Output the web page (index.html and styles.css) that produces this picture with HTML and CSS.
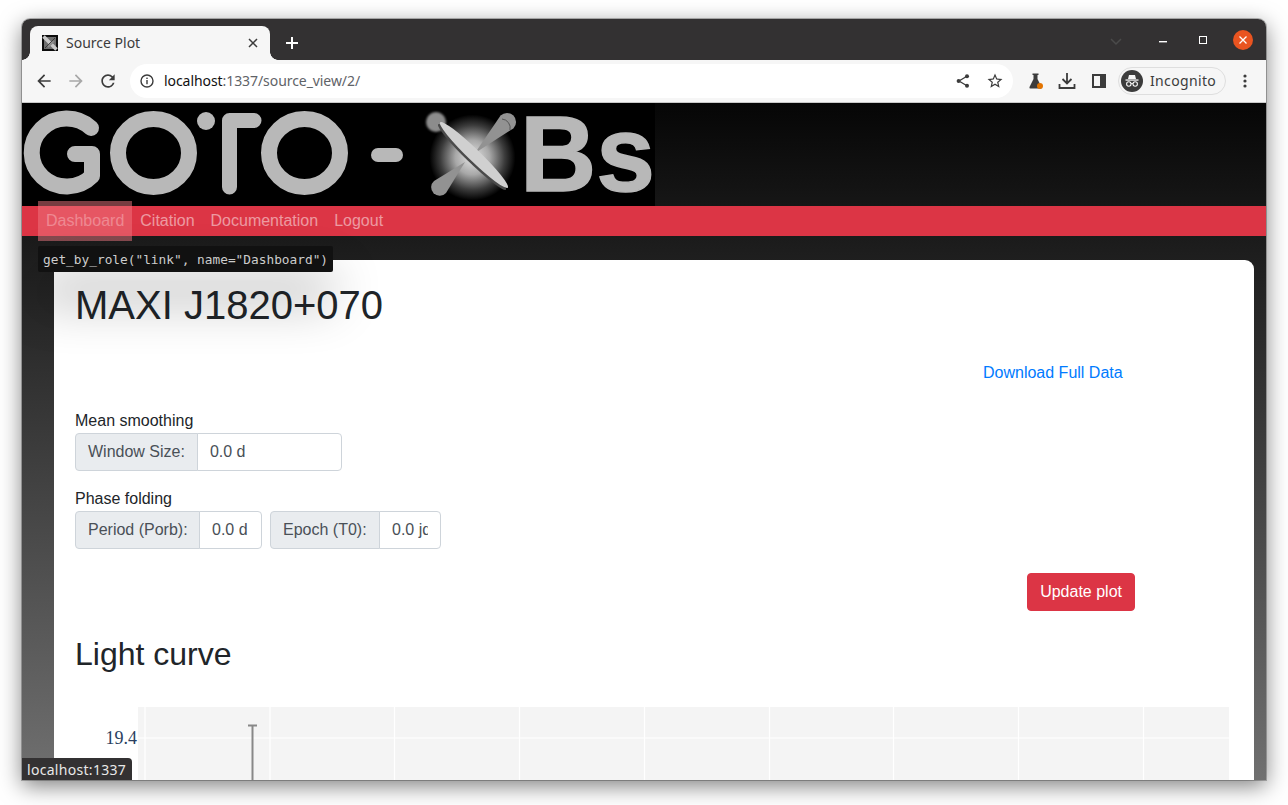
FILE: index.html
```html
<!DOCTYPE html>
<html lang="en">
<head>
<meta charset="utf-8">
<title>Source Plot</title>
<link rel="stylesheet" href="styles.css">
</head>
<body>
<div class="window">
  <div class="tabstrip">
    <div class="tab">
      <svg class="favicon" width="16" height="16" viewBox="0 0 16 16"><rect width="16" height="16" fill="#0c0c0c"/><rect x="2" y="2" width="12" height="12" fill="#6e6e6e"/><path d="M1.500 1.500 L14.500 14.500" stroke="#c8c8c8" stroke-width="3.500"/><path d="M3 13 L13 3" stroke="#3a3a3a" stroke-width="1"/><path d="M6 12 L12 6" stroke="#8c8c8c" stroke-width="2"/></svg>
      <span class="tab-title">Source Plot</span>
      <svg class="tab-close" width="10" height="10" viewBox="0 0 10 10"><path d="M1 1 L9 9 M9 1 L1 9" stroke="#3c3c3c" stroke-width="1.5"/></svg>
    </div>
    <svg class="new-tab" width="14" height="14" viewBox="0 0 14 14"><path d="M7 1 V13 M1 7 H13" stroke="#fff" stroke-width="2"/></svg>
    <div class="window-controls">
      <svg class="tab-search" width="12" height="8" viewBox="0 0 12 8"><path d="M1 1 L6 6 L11 1" fill="none" stroke="#4a4a4a" stroke-width="1.5"/></svg>
      <svg class="win-min" width="8" height="2" viewBox="0 0 8 2"><rect width="8" height="1.400" fill="#fff"/></svg>
      <svg class="win-max" width="8" height="8" viewBox="0 0 8 8"><rect x=".5" y=".5" width="7" height="7" fill="none" stroke="#fff"/></svg>
      <span class="win-close"><svg width="8" height="8" viewBox="0 0 8 8"><path d="M.5 .5 L7.500 7.500 M7.500 .5 L.5 7.500" stroke="#fff" stroke-width="1.300"/></svg></span>
    </div>
  </div>
  <div class="toolbar">
    <svg class="tool" width="20" height="20" viewBox="0 0 24 24"><path fill="#3c3c3c" d="M20 11H7.830l5.590-5.590L12 4l-8 8 8 8 1.410-1.410L7.830 13H20v-2z"/></svg>
    <svg class="tool" width="20" height="20" viewBox="0 0 24 24"><path fill="#a8a8a8" d="M4 11h12.170l-5.590-5.590L12 4l8 8-8 8-1.410-1.410L16.170 13H4v-2z"/></svg>
    <svg class="tool" width="20" height="20" viewBox="0 0 24 24"><path fill="#3c3c3c" d="M17.650 6.350A7.960 7.960 0 0 0 12 4c-4.420 0-7.990 3.580-7.990 8s3.570 8 7.990 8c3.730 0 6.840-2.550 7.730-6h-2.080A5.990 5.990 0 0 1 12 18c-3.310 0-6-2.690-6-6s2.690-6 6-6c1.660 0 3.140.69 4.220 1.780L13 11h7V4l-2.350 2.350z"/></svg>
    <div class="omnibox">
      <svg class="info" width="16" height="16" viewBox="0 0 16 16"><circle cx="8" cy="8" r="6" fill="none" stroke="#3c3c3c" stroke-width="1.400"/><rect x="7.300" y="7" width="1.400" height="4.200" fill="#3c3c3c"/><rect x="7.300" y="4.600" width="1.400" height="1.400" fill="#3c3c3c"/></svg>
      <span class="url"><span class="url-host">localhost</span>:1337/source_view/2/</span>
      <svg class="omni-share" width="16" height="16" viewBox="0 0 16 16"><path d="M11.500 3.500 L4 8 L11.500 12.500" fill="none" stroke="#3c3c3c" stroke-width="1.300"/><circle cx="12" cy="3.200" r="2" fill="#3c3c3c"/><circle cx="3.600" cy="8" r="2" fill="#3c3c3c"/><circle cx="12" cy="12.800" r="2" fill="#3c3c3c"/></svg>
      <svg class="omni-star" width="18" height="18" viewBox="0 0 24 24"><path fill="#3c3c3c" d="M22 9.240l-7.190-.62L12 2 9.190 8.630 2 9.240l5.460 4.730L5.820 21 12 17.270 18.180 21l-1.630-7.030L22 9.240zM12 15.400l-3.760 2.270 1-4.280-3.320-2.880 4.380-.38L12 6.100l1.710 4.040 4.380.38-3.320 2.880 1 4.280L12 15.400z"/></svg>
    </div>
    <svg class="ext-flask" width="16" height="18" viewBox="0 0 16 18"><path fill="#3c3c3c" d="M4.500 1.500 H10.500 V3 H9.500 V7 L13.500 15 Q14 16.500 12.500 16.500 H2.500 Q1 16.500 1.500 15 L5.500 7 V3 H4.500 Z"/><circle cx="12" cy="14" r="3" fill="#e37400"/></svg>
    <svg class="ext-dl" width="18" height="18" viewBox="0 0 18 18"><path d="M9 1 V11 M4.500 7 L9 11.500 L13.500 7" fill="none" stroke="#3c3c3c" stroke-width="1.800"/><path d="M1.500 12 V16 H16.500 V12" fill="none" stroke="#3c3c3c" stroke-width="1.800"/></svg>
    <svg class="ext-panel" width="14" height="14" viewBox="0 0 14 14"><rect x="1" y="1" width="12" height="12" fill="none" stroke="#3c3c3c" stroke-width="2"/><rect x="8" y="1" width="5" height="12" fill="#3c3c3c"/></svg>
    <div class="profile">
      <svg class="profile-icon" width="22" height="22" viewBox="0 0 22 22"><circle cx="11" cy="11" r="11" fill="#3c3c3c"/><path d="M7 9 L8 5 H14 L15 9 Z" fill="#f6f6f6"/><rect x="4.500" y="9.400" width="13" height="1.300" fill="#f6f6f6"/><circle cx="7.800" cy="14" r="2.200" fill="none" stroke="#f6f6f6" stroke-width="1.100"/><circle cx="14.200" cy="14" r="2.200" fill="none" stroke="#f6f6f6" stroke-width="1.100"/><path d="M10 13.600 H12" stroke="#f6f6f6" stroke-width="1"/></svg>
      <span>Incognito</span>
    </div>
    <svg class="kebab" width="4" height="14" viewBox="0 0 4 14"><circle cx="2" cy="2" r="1.600" fill="#3c3c3c"/><circle cx="2" cy="7" r="1.600" fill="#3c3c3c"/><circle cx="2" cy="12" r="1.600" fill="#3c3c3c"/></svg>
  </div>

  <div class="page">
    <header class="banner">
      <svg class="logo" width="633" height="103" viewBox="22 103 633 103" role="img" aria-label="GOTO - XBs">
        <defs>
          <radialGradient id="glow"><stop offset="0" stop-color="#e4e4e4"/><stop offset=".4" stop-color="#a8a8a8"/><stop offset=".75" stop-color="#3c3c3c"/><stop offset="1" stop-color="#000"/></radialGradient>
          <filter id="soft" x="-30%" y="-30%" width="160%" height="160%"><feGaussianBlur stdDeviation="1"/></filter>
        </defs>
        <rect x="22" y="103" width="633" height="103" fill="#000"/>
        <g fill="none" stroke="#b8b8b8" stroke-width="16" stroke-linecap="round" stroke-linejoin="round">
          <path d="M91 128 A35 34 0 1 0 92 176 V154 H75"/>
          <ellipse cx="153.500" cy="153" rx="35.500" ry="34"/>
          <path d="M254 120.500 H229.500 V187" stroke-width="15"/>
          <ellipse cx="304.500" cy="153" rx="35.500" ry="34"/>
          <path d="M378 155 H396" stroke-width="14"/>
        </g>
        <circle cx="206" cy="121" r="9" fill="#b8b8b8"/>
        <circle cx="472.500" cy="157.500" r="43" fill="url(#glow)"/>
        <circle cx="436" cy="122" r="10" fill="#8c8c8c" filter="url(#soft)"/>
        <path d="M475 153 L500.600 115.600 A9 9 0 1 1 513.400 128.400 Z" fill="#929292"/>
        <path d="M502 119 A9 9 0 0 1 510 130" fill="none" stroke="#555" stroke-width="1"/>
        <path d="M465 162 L434 181 A8.500 8.500 0 1 0 446 193 Z" fill="#929292"/>
        <ellipse cx="472" cy="157" rx="47" ry="5.500" transform="rotate(44 472 157)" fill="#4a4a4a"/>
        <ellipse cx="474" cy="155" rx="47" ry="6" transform="rotate(44 474 155)" fill="#d0d0d0"/>
        <text class="logo-bs" x="520" y="191" textLength="135" lengthAdjust="spacingAndGlyphs">Bs</text>
      </svg>
    </header>
    <nav class="navbar">
      <a class="nav-link" href="#">Dashboard</a>
      <a class="nav-link" href="#">Citation</a>
      <a class="nav-link" href="#">Documentation</a>
      <a class="nav-link" href="#">Logout</a>
    </nav>
    <main class="card">
      <h1>MAXI J1820+070</h1>
      <div class="download-row"><a href="#">Download Full Data</a></div>
      <div class="field-label">Mean smoothing</div>
      <div class="groups">
        <div class="input-group">
          <span class="addon">Window Size:</span>
          <input class="input w-window" type="text" value="0.0 d">
        </div>
      </div>
      <div class="field-label second">Phase folding</div>
      <div class="groups">
        <div class="input-group">
          <span class="addon addon-period">Period (Porb):</span>
          <input class="input w-period" type="text" value="0.0 d">
        </div>
        <div class="input-group">
          <span class="addon addon-epoch">Epoch (T0):</span>
          <input class="input w-epoch" type="text" value="0.0 jd">
        </div>
      </div>
      <div class="button-row"><button class="btn" type="button">Update plot</button></div>
      <h2>Light curve</h2>
      <svg class="plot" width="1154" height="80" viewBox="0 0 1154 80">
        <text class="tick" x="62" y="37" text-anchor="end">19.4</text>
        <rect x="63" y="0" width="1091" height="80" fill="#f4f4f4"/>
        <g stroke="#fff" stroke-width="1.200">
          <path d="M63 31 H1154"/>
          <path d="M70 0 V80 M195 0 V80 M319.500 0 V80 M444.500 0 V80 M569.500 0 V80 M694.500 0 V80 M818.500 0 V80 M943.500 0 V80 M1068.500 0 V80"/>
        </g>
        <path d="M177.500 18 V80 M173 18.500 H182" stroke="#888" stroke-width="2" fill="none"/>
      </svg>
    </main>
    <div class="highlight"></div>
    <div class="locator">get_by_role("link", name="Dashboard")</div>
    <div class="status">localhost:1337</div>
  </div>
</div>
</body>
</html>
```
FILE: styles.css
```css
* { box-sizing: border-box; }
html, body { height: 100%; }
body {
  margin: 0;
  padding: 19px 22px 25px;
  background: #fff;
  overflow: hidden;
  font-family: "Liberation Sans", Arial, sans-serif;
  font-size: 16px;
  line-height: 1.5;
  color: #212529;
}
.window {
  height: 761px;
  display: flex;
  flex-direction: column;
  border-radius: 8px 8px 0 0;
  overflow: hidden;
  box-shadow: 0 6px 22px rgba(0, 0, 0, .5), 0 0 0 1px rgba(0, 0, 0, .25);
}

/* browser chrome */
.tabstrip {
  height: 41px;
  flex: none;
  display: flex;
  align-items: flex-end;
  padding-left: 8px;
  background: #333132;
  font-family: "Noto Sans", sans-serif;
}
.tab {
  position: relative;
  width: 240px;
  height: 34px;
  display: flex;
  align-items: center;
  padding: 0 12px;
  background: #f6f6f6;
  border-radius: 8px 8px 0 0;
}
.tab::before, .tab::after {
  content: "";
  position: absolute;
  bottom: 0;
  width: 8px;
  height: 8px;
}
.tab::before { left: -8px; background: radial-gradient(circle at 0 0, #333132 7.5px, #f6f6f6 8px); }
.tab::after { right: -8px; background: radial-gradient(circle at 100% 0, #333132 7.5px, #f6f6f6 8px); }
.favicon { flex: none; }
.tab-title { flex: 1; margin: 0 0 2px 8px; font-size: 14px; color: #3c3c3c; white-space: nowrap; }
.tab-close { flex: none; margin-right: 0; }
.new-tab { flex: none; margin: 0 0 10px 15px; }
.window-controls { flex: 1; height: 100%; display: flex; align-items: center; justify-content: flex-end; padding-right: 13px; }
.tab-search { margin-right: 37px; margin-top: 4px; }
.win-min { margin-right: 32px; margin-top: 5px; }
.win-max { margin-right: 26px; }
.win-close { width: 20px; height: 20px; border-radius: 50%; background: #e95420; display: flex; align-items: center; justify-content: center; }

.toolbar {
  height: 43px;
  flex: none;
  display: flex;
  align-items: center;
  padding: 0 0 1px 12px;
  background: #f6f6f6;
  border-bottom: 1px solid #c9c9c9;
  font-family: "Noto Sans", sans-serif;
}
.tool { flex: none; margin-right: 12px; }
.omnibox {
  flex: none;
  width: 883px;
  height: 34px;
  margin-right: 15px;
  margin-left: -4px;
  display: flex;
  align-items: center;
  padding: 0 9px;
  background: #fff;
  border-radius: 17px;
}
.toolbar .tool:nth-child(3) { margin-right: 16px; }
.url { flex: 1; margin-left: 9px; font-size: 14px; color: #5f6368; letter-spacing: -.07px; white-space: nowrap; }
.url-host { color: #111; }
.omni-star { margin-left: 15px; }
.ext-flask { flex: none; }
.ext-dl { flex: none; margin-left: 14px; }
.ext-panel { flex: none; margin-left: 16px; }
.profile {
  flex: none;
  width: 108px;
  height: 28px;
  margin-left: 12px;
  display: flex;
  align-items: center;
  padding-left: 2px;
  border: 1px solid #dedede;
  border-radius: 14px;
  font-size: 14px;
  color: #3c3c3c;
}
.profile span { margin-left: 7px; letter-spacing: .35px; }
.kebab { flex: none; margin-left: 17px; }

/* page */
.page {
  position: relative;
  flex: 1;
  min-height: 0;
  overflow: hidden;
  background: linear-gradient(#060606 0, #707070 677px);
}
.banner { height: 103px; }
.logo { display: block; }
.logo-bs { font-family: "Liberation Sans", Arial, sans-serif; font-weight: 700; font-size: 108px; fill: #b8b8b8; stroke: #b8b8b8; stroke-width: 1.500px; }
.navbar {
  height: 30px;
  display: flex;
  align-items: center;
  padding: 0 16px;
  background: #dc3545;
}
.nav-link {
  padding: 8px;
  color: rgba(255, 255, 255, .5);
  text-decoration: none;
}
.card {
  margin: 24px 12px 0 32px;
  height: 560px;
  padding: 21px 21px 0;
  background: #fff;
  border-radius: 9px 9px 0 0;
}
h1 { margin: 0 0 8px; font-size: 40px; font-weight: 400; line-height: 48px; }
.download-row { height: 72px; padding: 24px 0 0 908px; }
.download-row a { color: #007bff; text-decoration: none; }
.field-label { height: 24px; }
.field-label.second { margin-top: 16px; }
.groups { display: flex; gap: 8px; }
.input-group { display: flex; height: 38px; }
.addon {
  display: flex;
  align-items: center;
  padding: 0 12px;
  background: #e9ecef;
  border: 1px solid #ced4da;
  border-radius: 4px 0 0 4px;
  color: #495057;
  white-space: nowrap;
}
.addon-period { width: 125px; padding-right: 0; }
.addon-epoch { width: 110px; padding-right: 0; }
.input {
  margin-left: -1px;
  padding: 6px 12px;
  border: 1px solid #ced4da;
  border-radius: 0 4px 4px 0;
  background: #fff;
  color: #495057;
  font: inherit;
}
.w-window { width: 145px; }
.w-period { width: 63px; }
.w-epoch { width: 62px; }
.button-row { display: flex; justify-content: flex-end; margin-top: 24px; padding-right: 98px; }
.btn {
  height: 38px;
  padding: 0 12px;
  border: 1px solid #dc3545;
  border-radius: 4px;
  background: #dc3545;
  color: #fff;
  font: inherit;
}
h2 { margin: 24px 0 34px; font-size: 32px; font-weight: 400; line-height: 38px; }
.plot { display: block; overflow: hidden; }
.tick { font-family: "Liberation Serif", "Times New Roman", serif; font-size: 18px; fill: #2a3f5f; }

/* overlays */
.highlight {
  position: absolute;
  left: 16px;
  top: 98px;
  width: 94px;
  height: 40px;
  background: rgba(240, 120, 130, .5);
}
.locator {
  position: absolute;
  left: 16px;
  top: 143px;
  height: 26px;
  padding: 2px 5px 0;
  display: flex;
  align-items: center;
  background: #111;
  border-radius: 2px;
  color: #ccc;
  font-family: "DejaVu Sans Mono", monospace;
  font-size: 12.800px;
  white-space: nowrap;
  box-shadow: 0 30px 50px rgba(0, 0, 0, .3);
}
.status {
  position: absolute;
  left: 0;
  bottom: 0;
  height: 22px;
  padding: 0 6px 0 5px;
  display: flex;
  align-items: center;
  background: #333132;
  border-radius: 0 4px 0 0;
  color: #e8e8e8;
  font-family: "Noto Sans", sans-serif;
  font-size: 14px;
  letter-spacing: .3px;
  white-space: nowrap;
}
```
